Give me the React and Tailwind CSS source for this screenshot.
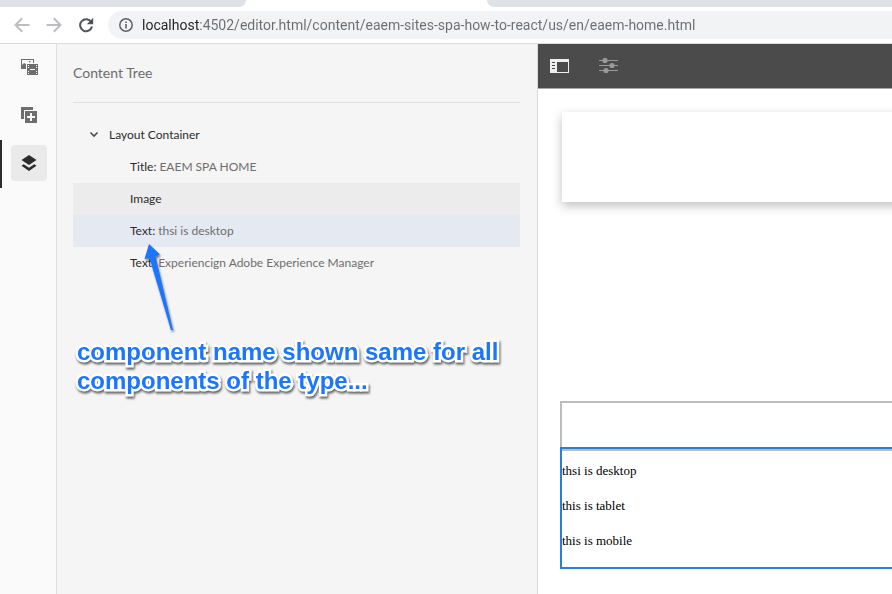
const tree = [
  { label: 'Title:', value: 'EAEM SPA HOME', tone: '' },
  { label: 'Image', value: '', tone: 'bg-[#ececec]' },
  { label: 'Text:', value: 'thsi is desktop', tone: 'bg-[#e5e9f2]', selected: true },
  { label: 'Text:', value: 'Experiencign Adobe Experience Manager', tone: '' },
];

function BrowserBar() {
  return (
    <header className="border-b border-[#dadce0] bg-white">
      <div className="flex h-[7px]">
        <div className="w-[246px] rounded-br-[7px] bg-[#dee1e6]" />
        <div className="w-[241px]" />
        <div className="flex-1 rounded-bl-[7px] bg-[#dee1e6]" />
      </div>
      <div className="flex items-center py-1 pl-[14px]">
        <button aria-label="Back" className="mr-4">
          <svg width="16" height="16" viewBox="0 0 16 16" fill="none" stroke="#bcbec1" strokeWidth="2"><path d="M15.5 8H2M8.2 1.2 1.5 8l6.7 6.8" /></svg>
        </button>
        <button aria-label="Forward" className="mr-4">
          <svg width="16" height="16" viewBox="0 0 16 16" fill="none" stroke="#bcbec1" strokeWidth="2"><path d="M.5 8H14M7.8 1.2 14.5 8l-6.7 6.8" /></svg>
        </button>
        <button aria-label="Reload" className="mr-[14px]">
          <svg width="16" height="16" viewBox="0 0 16 16"><path d="M13.2 5A6 6 0 1 0 14 9.6" fill="none" stroke="#505357" strokeWidth="2" /><path d="M15.2.8v6.400H8.800z" fill="#505357" /></svg>
        </button>
        <div className="flex h-7 flex-1 items-center rounded-l-full bg-[#f1f3f4] pl-[11px]">
          <svg width="14" height="14" viewBox="0 0 14 14" className="mr-[9px]"><circle cx="7" cy="7" r="6.2" fill="none" stroke="#5f6368" strokeWidth="1.5" /><path d="M6.2 6h1.6v4.5H6.2zM6.2 3.4h1.6V5H6.2z" fill="#5f6368" /></svg>
          <input
            aria-label="Address"
            defaultValue="localhost:4502/editor.html/content/eaem-sites-spa-how-to-react/us/en/eaem-home.html"
            className="min-w-0 flex-1 bg-linear-to-r from-[#202124] from-[58px] to-[#6a6d71] to-[58px] bg-clip-text font-[Roboto,'Noto_Sans',sans-serif] text-[14px] leading-5 text-[#6a6d71] outline-none [-webkit-text-fill-color:transparent]"
          />
        </div>
      </div>
    </header>
  );
}

function Rail() {
  return (
    <nav aria-label="Side panel" className="flex w-[57px] shrink-0 flex-col gap-3 border-r border-[#dfdfdf] bg-[#fafafa] pt-[5px] pl-[11px]">
      <button aria-label="Assets" className="flex size-9 items-center justify-center">
        <svg width="18" height="18" viewBox="0 0 18 18" fill="#6e6e6e">
          <path d="M1 1h13v4h-1V2H2v5l2-2 2 1v5H1z" />
          <path d="M9 3h1.500v1.300H9z" />
          <path fillRule="evenodd" d="M7 6h11v11H7zM8 7v1h1V7zm0 2v1h1V9zm0 4v1h1v-1zm0 2v1h1v-1zM16 7v1h1V7zm0 2v1h1V9zm0 4v1h1v-1zm0 2v1h1v-1zM10 11v1h5v-1z" />
        </svg>
      </button>
      <button aria-label="Components" className="flex size-9 items-center justify-center">
        <svg width="18" height="18" viewBox="0 0 18 18" fill="#6e6e6e">
          <path d="M1 1h12v3H4v9H1z" />
          <path fillRule="evenodd" d="M5 5h12v12H5zM10 7v3H7v2h3v3h2v-3h3v-2h-3V7z" />
        </svg>
      </button>
      <button aria-label="Content Tree" className="relative flex size-9 items-center justify-center rounded bg-[#eaeaea]">
        <span className="absolute -top-[5px] -left-[11px] h-12 w-[2px] bg-[#2c2c2c]" />
        <svg width="18" height="18" viewBox="0 0 18 18" fill="#2c2c2c">
          <path d="M9 1l7.500 5L9 11 1.500 6z" />
          <path d="M3.700 10.200 1.500 11.800 9 17l7.500-5.200-2.200-1.600L9 13.800z" />
        </svg>
      </button>
    </nav>
  );
}

function ContentTree() {
  return (
    <aside className="relative w-[481px] shrink-0 border-r border-[#d9d9d9] bg-[#f5f5f5] pr-[17px] pl-4 font-[Lato,'Open_Sans',sans-serif]">
      <h1 className="flex h-[59px] items-center border-b border-[#dedede] pb-[2px] text-[14px] text-[#6e6e6e]">Content Tree</h1>
      <div role="tree" className="pt-4 text-[12px] text-[#2c2c2c]">
        <button role="treeitem" aria-expanded="true" className="flex h-8 w-full items-center pl-4">
          <svg width="10" height="10" viewBox="0 0 10 10" fill="none" stroke="#4b4b4b" strokeWidth="1.600" className="mr-[10px]"><path d="M1.500 2.500 5 6 8.500 2.500" /></svg>
          Layout Container
        </button>
        {tree.map((row, i) => (
          <button key={i} role="treeitem" aria-selected={!!row.selected} className={`flex h-8 w-full items-center gap-[3px] pl-[57px] ${row.tone}`}>
            <span>{row.label}</span>
            {row.value && <span className="text-[#6e6e6e]">{row.value}</span>}
          </button>
        ))}
      </div>
      <svg width="40" height="96" viewBox="0 0 40 96" className="absolute top-[196px] left-[83px] drop-shadow-[1px_2px_1px_rgba(0,0,0,0.5)]">
        <path d="M9 4 20 14.500 15.500 16.500 33 90 31 90 9.500 18 4.500 19z" fill="#1a75ff" />
      </svg>
      <p className="absolute top-[293px] left-5 font-['Liberation_Sans',Arial,sans-serif] text-[24px] leading-[29px] font-bold whitespace-nowrap text-[#1a75ff] drop-shadow-[1px_2px_1px_rgba(0,0,0,0.6)] [-webkit-text-stroke:5px_white] [paint-order:stroke_fill] [stroke-linejoin:round]">
        component name shown same for all<br />components of the type...
      </p>
    </aside>
  );
}

function Editor() {
  return (
    <main className="min-w-0 flex-1 overflow-hidden bg-white">
      <div className="flex h-[45px] items-center gap-[29px] border-b border-[#a8a8a8] bg-[#4b4b4b] pl-3">
        <button aria-label="Toggle side panel">
          <svg width="20" height="16" viewBox="0 0 20 16"><path fill="#eee" fillRule="evenodd" d="M0 1h19v14H0zM7 4v10h11V4zM2 4v1h3V4zm0 3v1h3V7zm0 3v1h3v-1z" /></svg>
        </button>
        <button aria-label="Page information">
          <svg width="20" height="16" viewBox="0 0 20 16" fill="#999"><path d="M0 2h19v1H0zM0 7h19v1H0zM0 12h19v1H0z" /><circle cx="6" cy="2.500" r="2.600" /><circle cx="13" cy="7.500" r="2.600" /><circle cx="7" cy="12.500" r="2.600" /></svg>
        </button>
      </div>
      <div className="pt-[23px] pl-[22px]">
        <div className="-mr-6 ml-[2px] h-[90px] bg-white shadow-[0_4px_10px_rgba(0,0,0,0.25)]" />
        <div className="mt-[199px] h-[50px] border-2 border-r-0 border-[#bcbcbc]" />
        <div className="relative -mt-1 flex h-[122px] flex-col gap-4 border-2 border-r-0 border-[#2680d9] pt-3 font-['Liberation_Serif',serif] text-[13px] leading-[19px] text-black">
          <p>thsi is desktop</p>
          <p>this is tablet</p>
          <p>this is mobile</p>
        </div>
      </div>
    </main>
  );
}

export default function App() {
  return (
    <div className="flex min-h-screen flex-col bg-white">
      <BrowserBar />
      <div className="flex flex-1">
        <Rail />
        <ContentTree />
        <Editor />
      </div>
    </div>
  );
}
